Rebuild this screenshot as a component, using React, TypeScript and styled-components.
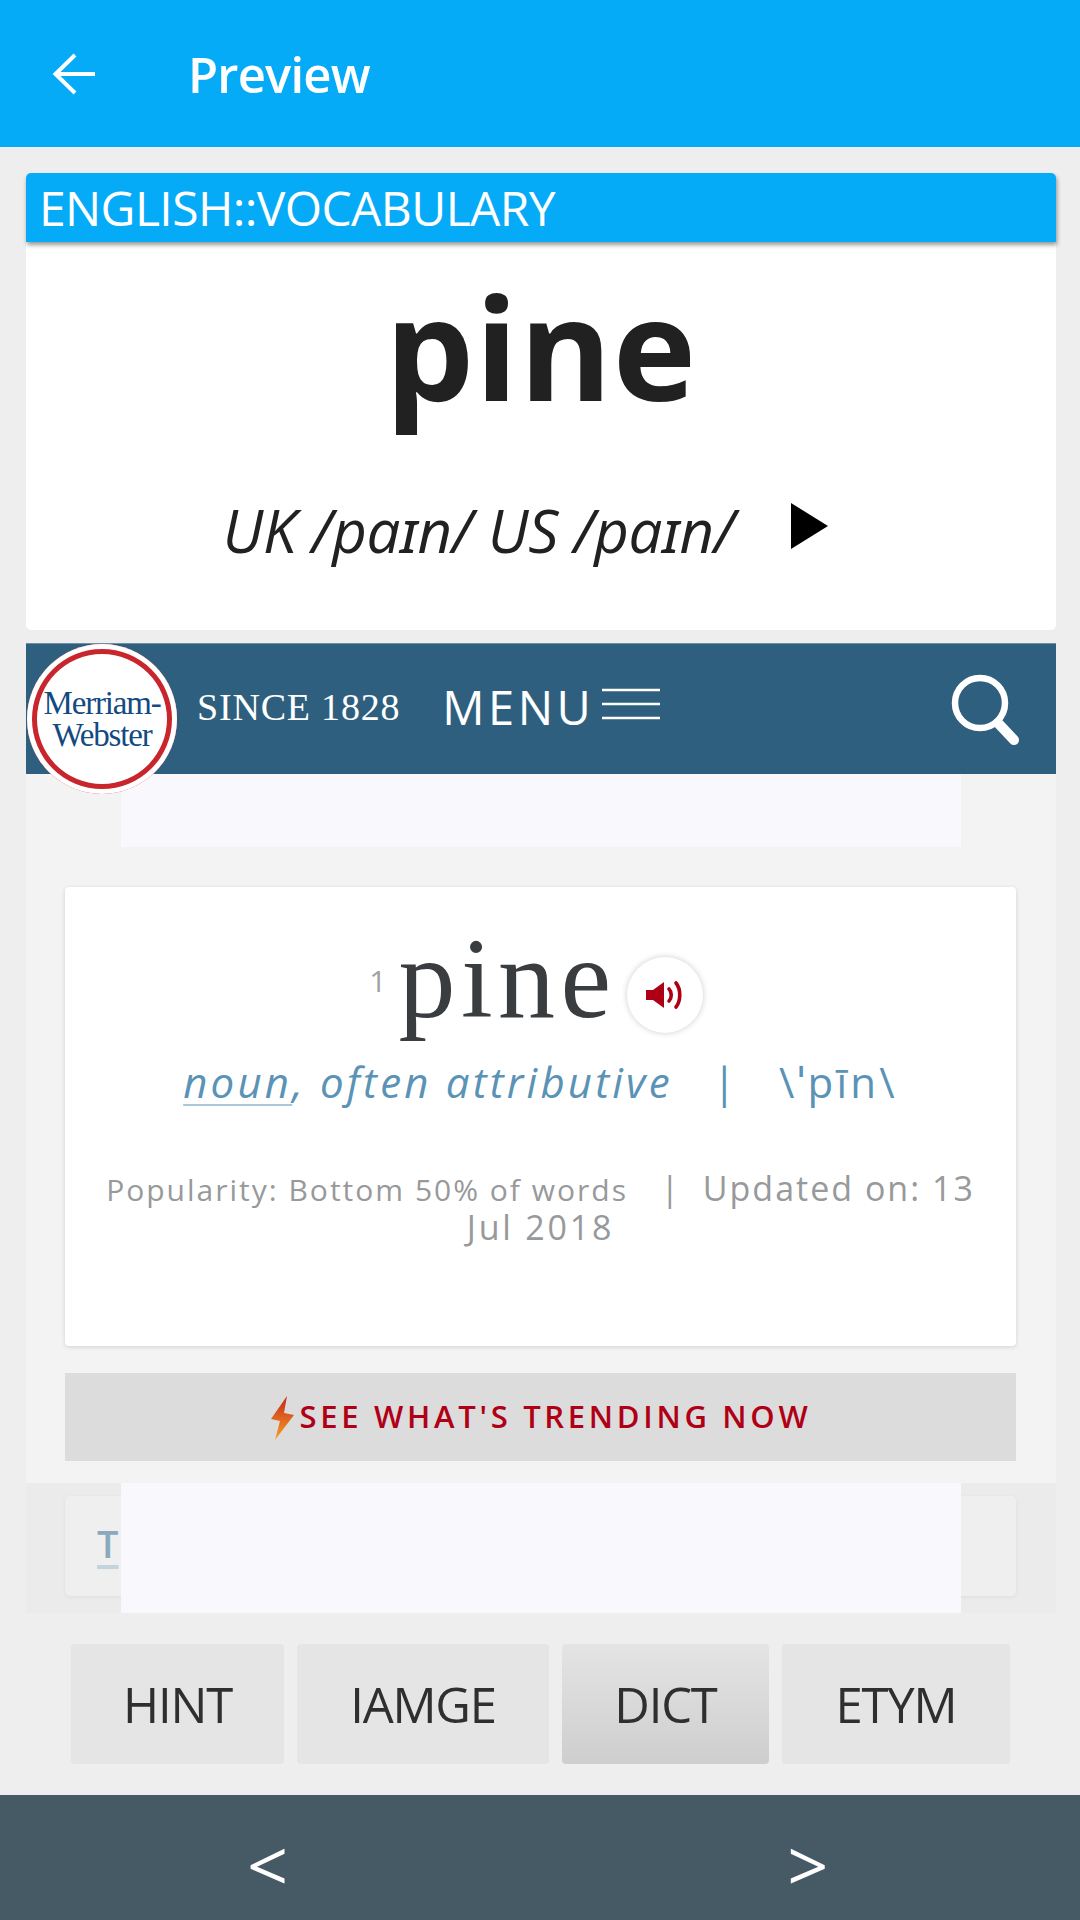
import React from 'react'
import styled, { createGlobalStyle } from 'styled-components'

const GlobalStyle = createGlobalStyle`
  html, body {
    margin: 0;
    padding: 0;
    background: #eeeeee;
  }
  * {
    box-sizing: border-box;
  }
`

const Screen = styled.div`
  width: 1080px;
  height: 1920px;
  overflow: hidden;
  display: flex;
  flex-direction: column;
  background: #eeeeee;
  font-family: 'Open Sans', 'Noto Sans', sans-serif;
`

const AppBar = styled.header`
  height: 147px;
  flex: none;
  display: flex;
  align-items: center;
  padding-left: 52px;
  background: #05abf6;
  color: #fff;
`

const AppTitle = styled.h1`
  margin: 0 0 0 92px;
  font-size: 49px;
  font-weight: 600;
  letter-spacing: -0.8px;
`

const Content = styled.main`
  flex: 1;
  padding: 26px 24px 0 26px;
  display: flex;
  flex-direction: column;
`

const WordCard = styled.section`
  height: 457px;
  flex: none;
  background: #fff;
  border-radius: 5px;
  display: flex;
  flex-direction: column;
  align-items: center;
`

const DeckBar = styled.div`
  align-self: stretch;
  height: 69px;
  padding-left: 13px;
  background: #05abf6;
  border-radius: 5px 5px 0 0;
  box-shadow: 1px 3px 4px rgba(0, 0, 0, 0.4);
  color: #fff;
  font-size: 48px;
  line-height: 69px;
  letter-spacing: -0.6px;
`

const Headword = styled.div`
  margin-top: 19px;
  color: #212121;
  font-size: 141px;
  line-height: 170px;
  font-weight: 700;
  letter-spacing: 1px;
`

const PronRow = styled.div`
  margin-top: 59px;
  padding-right: 31px;
  display: flex;
  align-items: center;
  color: #212121;
`

const Pron = styled.span`
  font-size: 60px;
  line-height: 80px;
  font-style: italic;
  letter-spacing: -0.3px;
`

const PlayIcon = styled.svg`
  width: 38px;
  height: 46px;
  margin-left: 56px;
  margin-top: -8px;
`

const Dictionary = styled.section`
  position: relative;
  height: 970px;
  margin-top: 13px;
  flex: none;
  display: flex;
  flex-direction: column;
  background: #f3f3f3;
`

const MwHeader = styled.div`
  height: 131px;
  flex: none;
  display: flex;
  align-items: flex-start;
  padding: 38px 36px 0 171px;
  background: #2e5f7e;
  border-top: 1px solid #6d8ea3;
  color: #fff;
`

const MwLogo = styled.div`
  position: absolute;
  left: 1px;
  top: 1px;
  width: 150px;
  height: 150px;
  border-radius: 50%;
  background: #fff;
  display: flex;
  flex-direction: column;
  align-items: center;
  justify-content: center;
  box-shadow: inset 0 0 0 5px #fff, inset 0 0 0 10px #c8252c;
  color: #134a80;
  font-family: 'Liberation Serif', serif;
  font-size: 33px;
  letter-spacing: -1.2px;
`

const LogoLine = styled.div`
  height: 32px;
  line-height: 32px;
`

const Since = styled.span`
  font-family: 'Liberation Serif', serif;
  font-size: 38px;
  line-height: 50px;
  letter-spacing: 0.8px;
`

const MenuLabel = styled.span`
  margin-left: 42px;
  font-size: 47px;
  line-height: 50px;
  letter-spacing: 3.5px;
  font-weight: 400;
`

const MenuLines = styled.svg`
  width: 58px;
  height: 32px;
  margin: 6px 0 0 8px;
`

const SearchIcon = styled.svg`
  width: 70px;
  height: 74px;
  margin: -9px 0 0 auto;
`

const AdSlot = styled.div<{ $height: number }>`
  width: 840px;
  height: ${({ $height }) => $height}px;
  background: #f8f8fd;
`

const TopAd = styled(AdSlot)`
  margin-left: 95px;
  flex: none;
`

const EntryCard = styled.article`
  margin: 40px 40px 0 39px;
  height: 459px;
  flex: none;
  padding-top: 34px;
  background: #fff;
  border-radius: 4px;
  box-shadow: 0 1px 4px rgba(0, 0, 0, 0.14);
  display: flex;
  flex-direction: column;
  align-items: center;
`

const EntryTitle = styled.div`
  display: flex;
  align-items: flex-start;
  height: 110px;
  padding-right: 9px;
`

const EntryNumber = styled.sup`
  margin: 42px 12px 0 0;
  color: #a0a0a0;
  font-size: 30px;
  line-height: 36px;
  vertical-align: baseline;
`

const EntryWord = styled.h2`
  margin: 3px 0 0;
  color: #3a3d40;
  font-family: 'Liberation Serif', serif;
  font-size: 114px;
  line-height: 110px;
  font-weight: 400;
  letter-spacing: 5.5px;
`

const SpeakerButton = styled.div`
  width: 76px;
  height: 76px;
  margin: 36px 0 0 10px;
  border-radius: 50%;
  background: #fff;
  box-shadow: 0 0 6px rgba(0, 0, 0, 0.2);
  display: flex;
  align-items: center;
  justify-content: center;
`

const PosLine = styled.div`
  margin-top: 22px;
  display: flex;
  align-items: center;
  color: #5a93b5;
  font-size: 42px;
  line-height: 58px;
  letter-spacing: 3.2px;
`

const PosLabel = styled.em`
  font-style: italic;
  u {
    text-decoration-thickness: 2px;
    text-underline-offset: 6px;
    text-decoration-color: #a9c8da;
  }
`

const Divider = styled.span<{ $gap: number }>`
  margin: 0 ${({ $gap }) => $gap}px;
  font-size: 42px;
  font-weight: 400;
`

const Meta = styled.div`
  width: 880px;
  margin-top: 58px;
  color: #97999b;
  font-size: 34px;
  letter-spacing: 2px;
  text-align: center;
`

const MetaLine = styled.div`
  height: 39px;
  line-height: 39px;
  white-space: nowrap;
`

const JulyLine = styled(MetaLine)`
  letter-spacing: 2.8px;
`

const Popularity = styled.span`
  font-size: 30px;
  letter-spacing: 2px;
`

const TrendingBar = styled.div`
  margin: 27px 40px 0 39px;
  height: 88px;
  flex: none;
  padding-bottom: 3px;
  background: #dcdcdc;
  display: flex;
  align-items: center;
  justify-content: center;
  color: #b00016;
  font-size: 31px;
  font-weight: 600;
  letter-spacing: 3.7px;
`

const BoltIcon = styled.svg`
  width: 26px;
  height: 44px;
  margin: 5px 4px 0 0;
`

const LowerBand = styled.div`
  position: relative;
  margin-top: 22px;
  height: 130px;
  flex: none;
  padding: 13px 40px 0 39px;
  background: #ebebeb;
`

const LowerCard = styled.div`
  height: 100px;
  padding: 22px 32px;
  background: #efefef;
  border-radius: 5px;
  box-shadow: 0 1px 4px rgba(0, 0, 0, 0.06);
  color: #8aa9bd;
  font-size: 38px;
  font-weight: 600;
  line-height: 50px;
  u {
    text-decoration-color: #c5d3dc;
    text-decoration-thickness: 4px;
    text-underline-offset: 7px;
  }
`

const LowerAd = styled(AdSlot)`
  position: absolute;
  top: 0;
  left: 95px;
`

const Tabs = styled.nav`
  height: 182px;
  flex: none;
  display: flex;
  align-items: flex-start;
  gap: 13px;
  padding: 31px 0 0 45px;
`

const Tab = styled.div<{ $width: number; $active?: boolean }>`
  width: ${({ $width }) => $width}px;
  height: 120px;
  display: flex;
  align-items: center;
  justify-content: center;
  border-radius: 4px;
  background: ${({ $active }) => ($active ? 'linear-gradient(#e4e4e4, #cecece)' : '#e5e5e5')};
  color: #2f2f2f;
  font-size: 49px;
  letter-spacing: -1.2px;
`

const Footer = styled.footer`
  height: 125px;
  flex: none;
  display: flex;
  align-items: center;
  padding: 12px 0 0 247px;
  background: #465a65;
  color: #fff;
  font-size: 72px;
  font-weight: 400;
`

const FooterKey = styled.span<{ $gap?: number }>`
  margin-left: ${({ $gap }) => $gap ?? 0}px;
`

export default function App() {
  return (
    <Screen>
      <GlobalStyle />
      <AppBar>
        <svg width="44" height="42" viewBox="0 0 44 42" fill="none" stroke="#fff" strokeWidth="4">
          <path d="M43 21H4M23 2 3.5 21 23 40" />
        </svg>
        <AppTitle>Preview</AppTitle>
      </AppBar>
      <Content>
        <WordCard>
          <DeckBar>ENGLISH::VOCABULARY</DeckBar>
          <Headword>pine</Headword>
          <PronRow>
            <Pron>UK /paɪn/ US /paɪn/</Pron>
            <PlayIcon viewBox="0 0 38 46">
              <path d="M0 0 37 23 0 46Z" fill="#000" />
            </PlayIcon>
          </PronRow>
        </WordCard>
        <Dictionary>
          <MwHeader>
            <Since>SINCE 1828</Since>
            <MenuLabel>MENU</MenuLabel>
            <MenuLines viewBox="0 0 58 32" stroke="#fff" strokeWidth="2.5">
              <path d="M0 2H58M0 16H58M0 30H58" />
            </MenuLines>
            <SearchIcon viewBox="0 0 70 74" fill="none" stroke="#fff">
              <circle cx="30" cy="30" r="25" strokeWidth="6.5" />
              <path d="M48 50 64 67" strokeWidth="10" strokeLinecap="round" />
            </SearchIcon>
          </MwHeader>
          <MwLogo>
            <LogoLine>Merriam-</LogoLine>
            <LogoLine>Webster</LogoLine>
          </MwLogo>
          <TopAd $height={73} />
          <EntryCard>
            <EntryTitle>
              <EntryNumber>1</EntryNumber>
              <EntryWord>pine</EntryWord>
              <SpeakerButton>
                <svg width="38" height="30" viewBox="0 0 38 30">
                  <path d="M0 10H7L18 2V28L7 20H0Z" fill="#ad0014" />
                  <path
                    d="M23 9C26 12 26 18 23 21M30 3C35 9 35 21 30 27"
                    fill="none"
                    stroke="#ad0014"
                    strokeWidth="3.6"
                    strokeLinecap="round"
                  />
                </svg>
              </SpeakerButton>
            </EntryTitle>
            <PosLine>
              <PosLabel>
                <u>noun</u>, often attributive
              </PosLabel>
              <Divider $gap={40}>|</Divider>
              <span>\ˈpīn\</span>
            </PosLine>
            <Meta>
              <MetaLine>
                <Popularity>Popularity: Bottom 50% of words</Popularity> &nbsp;&nbsp;|&nbsp; Updated on: 13
              </MetaLine>
              <JulyLine>Jul 2018</JulyLine>
            </Meta>
          </EntryCard>
          <TrendingBar>
            <BoltIcon viewBox="0 0 26 44">
              <defs>
                <linearGradient id="bolt" x1="0" y1="0" x2="0" y2="1">
                  <stop offset="0" stopColor="#c3261c" />
                  <stop offset="1" stopColor="#fba023" />
                </linearGradient>
              </defs>
              <path d="M17 0 1 23 10 25 5 44 24 19 14 17Z" fill="url(#bolt)" />
            </BoltIcon>
            SEE WHAT'S TRENDING NOW
          </TrendingBar>
          <LowerBand>
            <LowerCard>
              <u>T</u>
            </LowerCard>
            <LowerAd $height={130} />
          </LowerBand>
        </Dictionary>
        <Tabs>
          <Tab $width={213}>HINT</Tab>
          <Tab $width={252}>IAMGE</Tab>
          <Tab $width={207} $active>
            DICT
          </Tab>
          <Tab $width={228}>ETYM</Tab>
        </Tabs>
      </Content>
      <Footer>
        <FooterKey>&lt;</FooterKey>
        <FooterKey $gap={499}>&gt;</FooterKey>
      </Footer>
    </Screen>
  )
}
